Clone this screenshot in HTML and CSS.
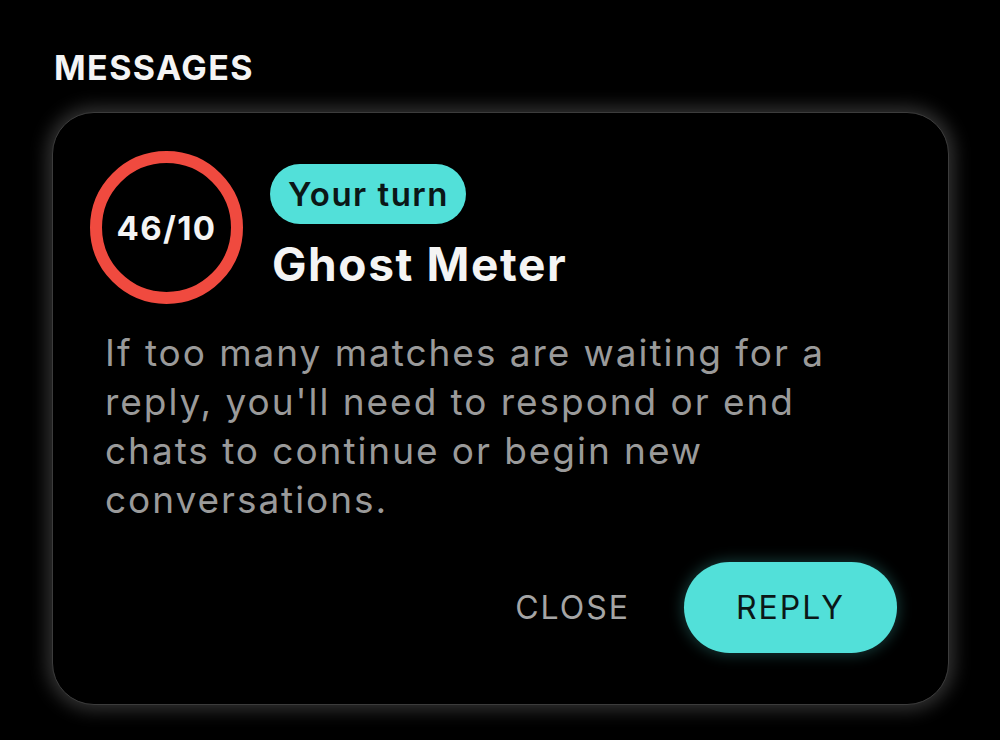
FILE: index.html
```html
<!DOCTYPE html>
<html>
<head>
<meta charset="utf-8">
<link rel="stylesheet" href="styles.css">
</head>
<body>
<div class="page">
  <h1 class="section-title">MESSAGES</h1>
  <div class="card">
    <div class="card-head">
      <div class="meter"><span>46/10</span></div>
      <div class="head-text">
        <span class="badge">Your turn</span>
        <h2 class="title">Ghost Meter</h2>
      </div>
    </div>
    <p class="desc">If too many matches are waiting for a reply, you'll need to respond or end chats to continue or begin new conversations.</p>
    <div class="actions">
      <button class="btn-close">CLOSE</button>
      <button class="btn-reply">REPLY</button>
    </div>
  </div>
</div>
</body>
</html>
```

FILE: styles.css
```css
* { box-sizing: border-box; }
html, body { margin: 0; padding: 0; background: #000; }
body { font-family: Inter, "Noto Sans", sans-serif; color: #fff; width: 1000px; height: 740px; overflow: hidden; }
.page { padding: 48px 51px 0 52px; }
.section-title {
  margin: 0 0 0 2px;
  font-size: 34px;
  font-weight: 700;
  letter-spacing: 1.4px;
  line-height: 40px;
  color: #f4f4f4;
}
.card {
  margin-top: 24px;
  width: 897px;
  height: 593px;
  border-radius: 42px;
  background: #000;
  border: 1.5px solid #3c3c3c;
  box-shadow: 0 0 18px 5px rgba(255,255,255,0.2);
  padding: 38px 51px 0 37px;
  display: flex;
  flex-direction: column;
}
.card-head { display: flex; align-items: flex-start; gap: 27px; }
.meter {
  width: 153px; height: 153px;
  border-radius: 50%;
  border: 12px solid #f04a3f;
  display: flex; align-items: center; justify-content: center;
  flex: none;
}
.meter span { font-size: 33px; font-weight: 700; color: #f4f4f4; letter-spacing: 1.4px; }
.head-text { display: flex; flex-direction: column; align-items: flex-start; padding-top: 13px; }
.badge {
  background: #52e0d9;
  color: #0b1717;
  font-size: 33px;
  font-weight: 600;
  height: 60px;
  line-height: 60px;
  padding: 0 17px 0 18px;
  border-radius: 30px;
  letter-spacing: 1.5px;
}
.title {
  margin: 14px 0 0 2px;
  font-size: 46px;
  font-weight: 700;
  line-height: 52px;
  color: #f4f4f4;
  letter-spacing: 1.6px;
}
.desc {
  margin: 24px 0 0 15px;
  font-size: 37px;
  line-height: 49px;
  color: #9a9a9a;
  letter-spacing: 1.95px;
  width: 750px;
}
.actions {
  margin-top: auto;
  margin-bottom: 51px;
  display: flex;
  justify-content: flex-end;
  align-items: center;
  gap: 54px;
}
button { font-family: inherit; border: none; cursor: pointer; }
.btn-close {
  background: none;
  color: #a5a5a5;
  font-size: 32px;
  letter-spacing: 2px;
  padding: 0;
}
.btn-reply {
  background: #52e0d9;
  color: #0b1717;
  width: 213px;
  height: 91px;
  border-radius: 46px;
  font-size: 32px;
  letter-spacing: 2px;
  padding: 0;
  box-shadow: 0 0 14px 2px rgba(82,224,217,0.25);
}
```
